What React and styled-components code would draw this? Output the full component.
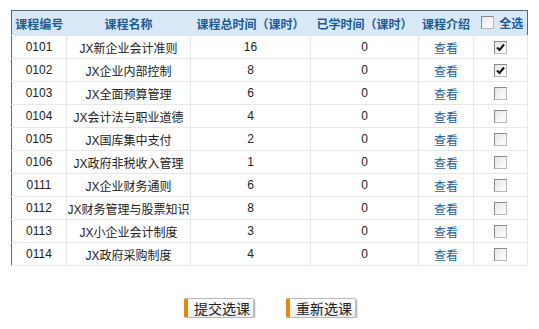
import React from "react";
import styled, { createGlobalStyle } from "styled-components";

const courses = [
  { id: "0101", name: "JX新企业会计准则", total: 16, done: 0, checked: true },
  { id: "0102", name: "JX企业内部控制", total: 8, done: 0, checked: true },
  { id: "0103", name: "JX全面预算管理", total: 6, done: 0 },
  { id: "0104", name: "JX会计法与职业道德", total: 4, done: 0 },
  { id: "0105", name: "JX国库集中支付", total: 2, done: 0 },
  { id: "0106", name: "JX政府非税收入管理", total: 1, done: 0 },
  { id: "0111", name: "JX企业财务通则", total: 6, done: 0 },
  { id: "0112", name: "JX财务管理与股票知识", total: 8, done: 0 },
  { id: "0113", name: "JX小企业会计制度", total: 3, done: 0 },
  { id: "0114", name: "JX政府采购制度", total: 4, done: 0 },
];

const Check = ({ checked }) => (
  <Box>
    {checked && (
      <svg width="9" height="9" viewBox="0 0 9 9">
        <path d="M1 4.5 L3.5 7 L8 1.5" fill="none" stroke="#111" strokeWidth="2" />
      </svg>
    )}
  </Box>
);

const App = () => {
  return (
    <Page>
      <GlobalStyle />
      <Table>
        <colgroup>
          <col style={{ width: 55 }} />
          <col style={{ width: 124 }} />
          <col style={{ width: 120 }} />
          <col style={{ width: 108 }} />
          <col style={{ width: 55 }} />
          <col style={{ width: 54 }} />
        </colgroup>
        <thead>
          <tr>
            <Th>课程编号</Th>
            <Th>课程名称</Th>
            <Th>课程总时间（课时）</Th>
            <Th>已学时间（课时）</Th>
            <Th>课程介绍</Th>
            <Th>
              <AllSel>
                <Check />
                全选
              </AllSel>
            </Th>
          </tr>
        </thead>
        <tbody>
          {courses.map((c) => (
            <tr key={c.id}>
              <Td>{c.id}</Td>
              <Td>{c.name}</Td>
              <Td>{c.total}</Td>
              <Td>{c.done}</Td>
              <Td>
                <Link>查看</Link>
              </Td>
              <Td>
                <Check checked={c.checked} />
              </Td>
            </tr>
          ))}
        </tbody>
      </Table>
      <Actions>
        <Btn>提交选课</Btn>
        <Btn>重新选课</Btn>
      </Actions>
    </Page>
  );
};

const GlobalStyle = createGlobalStyle`
body {
    margin: 0;
    background: #fff;
    font-family: "Liberation Sans", "Noto Sans CJK SC", sans-serif;
    font-size: 12px;
    color: #222;
}
`;

const Page = styled.div`
padding: 10px 0 0 11px;
width: 539px;
box-sizing: border-box;
`;

const Table = styled.table`
border-collapse: collapse;
table-layout: fixed;
width: 517px;
border: 1px solid #58687a;
`;

const Th = styled.th`
height: 24px;
padding: 0;
background: #d8e8f7;
color: #1d5b93;
font-weight: bold;
font-size: 12px;
white-space: nowrap;
text-align: center;
border-bottom: 1px solid #e3e8ee;
`;

const Td = styled.td`
height: 22px;
padding: 0;
text-align: center;
white-space: nowrap;
background: #fff;
border-right: 1px solid #e6e9ec;
border-bottom: 1px solid #e6e9ec;
`;

const Link = styled.span`
color: #1f5f9c;
`;

const Box = styled.span`
display: inline-flex;
align-items: center;
justify-content: center;
width: 11px;
height: 11px;
border: 1px solid #b8b8b8;
border-top-color: #8a8a8a;
border-left-color: #8a8a8a;
background: linear-gradient(135deg, #e6e6e6, #fff);
vertical-align: middle;
`;

const AllSel = styled.span`
display: inline-flex;
align-items: center;
gap: 5px;
margin-left: 4px;
`;

const Actions = styled.div`
display: flex;
justify-content: center;
gap: 32px;
padding: 32px 0 0 0;
width: 517px;
`;

const Btn = styled.button`
width: 70px;
height: 20px;
padding: 0 0 0 4px;
font-family: "Noto Sans CJK SC", sans-serif;
font-size: 14px;
color: #222;
border: 1px solid #b9b9b9;
border-left: 4px solid #e08a10;
border-radius: 2px;
background: linear-gradient(#ffffff, #e9edf1);
box-shadow: 1px 1px 2px rgba(0, 0, 0, 0.35);
line-height: 18px;
`;

export default App;
